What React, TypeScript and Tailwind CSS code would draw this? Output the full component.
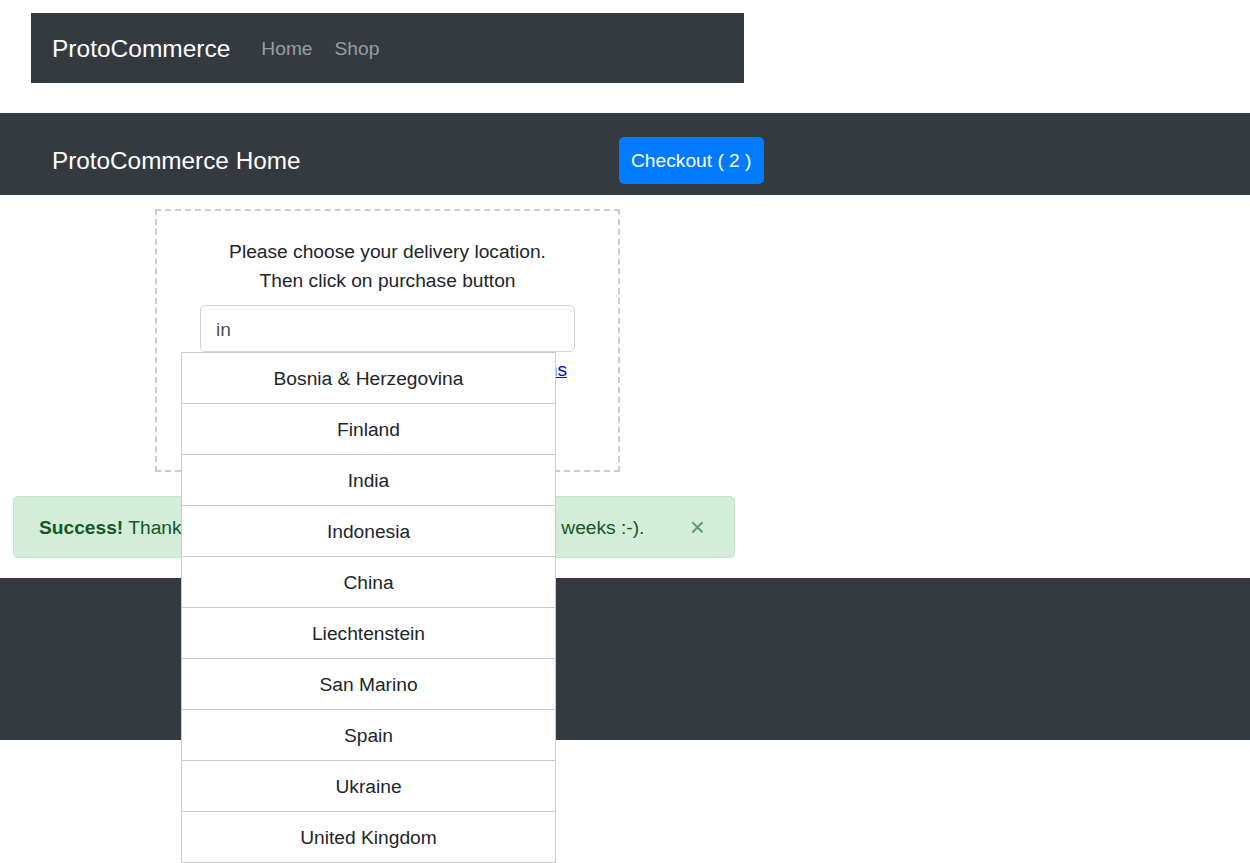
import React from "react";

const countries = [
  "Bosnia & Herzegovina",
  "Finland",
  "India",
  "Indonesia",
  "China",
  "Liechtenstein",
  "San Marino",
  "Spain",
  "Ukraine",
  "United Kingdom",
];

export default function App() {
  return (
    <div className="min-h-[863px] bg-white font-['Liberation_Sans',Arial,sans-serif] text-[#212529]">
      {/* Top navbar */}
      <div className="pt-[13px] pl-[31px]">
        <nav className="flex h-[70px] w-[713px] items-center bg-[#343a40] px-[21px] pt-[2px]">
          <span className="mr-[20px] text-[24.5px] leading-none text-white">ProtoCommerce</span>
          <a className="px-[11px] text-[19.2px] text-white/50">Home</a>
          <a className="px-[11px] text-[19.2px] text-white/50">Shop</a>
        </nav>
      </div>

      {/* Page header */}
      <header className="mt-[30px] flex h-[82px] items-start bg-[#343a40] pl-[52px] pt-[24px]">
        <h1 className="mt-[6px] w-[567px] text-[24.3px] leading-[36px] text-white">ProtoCommerce Home</h1>
        <button className="h-[47px] rounded-[5px] bg-[#007bff] px-[12px] pt-[2px] text-[19.2px] text-white">
          Checkout ( 2 )
        </button>
      </header>

      {/* Delivery box */}
      <div className="ml-[155px] mt-[14px] h-[263px] w-[465px] border-2 border-dashed border-[#ccc] pt-[27px]">
        <p className="text-center text-[19.2px] leading-[28.8px]">
          Please choose your delivery location.
          <br />
          Then click on purchase button
        </p>
        <div className="relative ml-[43px] mt-[9px] w-[375px]">
          <input
            readOnly
            value="in"
            className="h-[47px] w-full rounded-[5px] border border-[#ced4da] px-[15px] pt-[3px] text-[19.2px] text-[#495057] outline-none"
          />
          <ul className="absolute left-[-19px] top-full z-10 w-[375px] bg-white">
            {countries.map((c, i) => (
              <li
                key={c}
                className={`flex h-[51px] items-center justify-center border-x border-t border-[#ccc] pt-[3px] text-[19.2px] ${
                  i === countries.length - 1 ? "h-[52px] border-b" : ""
                }`}
              >
                {c}
              </li>
            ))}
          </ul>
        </div>
        <div className="mt-[4px] flex items-center justify-end gap-2 pr-[51px] text-[19.2px] leading-[28.8px]">
          <input type="checkbox" className="h-4 w-4" />
          <a className="text-[#0000ee] underline">I agree with the term &amp; Conditions</a>
        </div>
        <div className="mt-[14px] flex justify-center">
          <button className="rounded-[5px] bg-[#28a745] px-[14px] py-[7px] text-[19.2px] text-white">Purchase</button>
        </div>
      </div>

      {/* Success alert */}
      <div className="relative ml-[13px] mt-[24px] flex h-[62px] w-[722px] items-center rounded-[5px] border border-[#c3e6cb] bg-[#d4edda] pl-[25px] pt-[3px] text-[19.2px] text-[#155724]">
        <span>
          <strong>Success!</strong> Thank you! Your order will be delivered in next few weeks :-).
        </span>
        <button className="absolute right-[29px] top-1/2 -translate-y-1/2 text-[26px] font-normal leading-none text-[#155724]/60">
          ×
        </button>
      </div>

      {/* Footer */}
      <footer className="mt-[20px] h-[162px] bg-[#343a40]" />
    </div>
  );
}
